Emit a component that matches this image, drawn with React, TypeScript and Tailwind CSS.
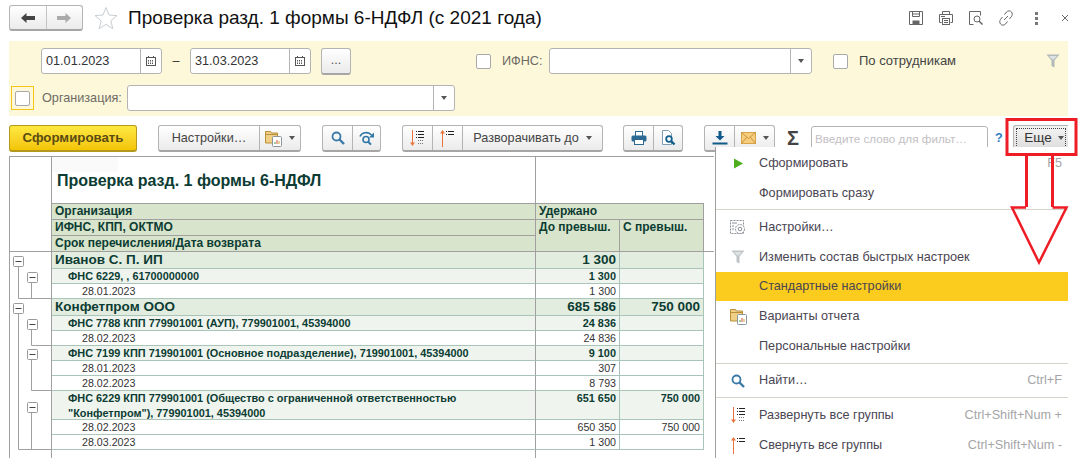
import type { ReactNode } from 'react';

const btn =
  'flex items-center justify-center bg-linear-to-b from-white to-[#ebebeb] border border-[#b4b4b4] border-b-2 border-b-[#a6a6a6] rounded-[3px]';

function Arrow() {
  return <span className="w-0 h-0 border-x-[3px] border-x-transparent border-t-[4px] border-t-[#555]" />;
}

function Calendar() {
  return (
    <svg width="12" height="12" viewBox="0 0 12 12" fill="none" stroke="#555">
      <rect x="1.5" y="2.5" width="9" height="8" />
      <path d="M3.5 1v2M8.5 1v2" />
      <path d="M3 5.5h6M3 7h6M3 8.5h6" strokeDasharray="1 1" />
    </svg>
  );
}

function Check({ className = '' }: { className?: string }) {
  return <span className={`block w-[15px] h-[15px] bg-white border border-[#a9a9a9] rounded-[2px] ${className}`} />;
}

function Filter({ color = '#a5aeb3' }: { color?: string }) {
  return (
    <svg width="14" height="14" viewBox="0 0 14 14">
      <path d="M0.5 0.5h13l-5 6v7l-3-1.5v-5.5z" fill={color} opacity="0.85" />
      <path d="M3 2h8l-3.2 3.6h-1.6z" fill="#dde2e4" />
    </svg>
  );
}

function Folder() {
  return (
    <svg width="17" height="17" viewBox="0 0 17 17">
      <path d="M0.5 1.5h5l1 1.5h6v10h-12z" fill="#f0cf87" stroke="#b98f3d" />
      <path d="M0.5 4.5h12" stroke="#b98f3d" />
      <rect x="7.5" y="6.5" width="9" height="10" rx="1" fill="#fff" stroke="#8a97a0" />
      <path d="M10 14v-2" stroke="#3aa03a" />
      <path d="M12 14v-4" stroke="#d9503f" />
      <path d="M14 14v-3" stroke="#d9a13f" />
    </svg>
  );
}

function Search({ color = '#3a7aa8' }: { color?: string }) {
  return (
    <svg width="14" height="14" viewBox="0 0 14 14" fill="none" stroke={color}>
      <circle cx="5.5" cy="5.5" r="4" strokeWidth="1.8" />
      <path d="M8.5 8.5l4.5 4.5" strokeWidth="2.4" />
    </svg>
  );
}

function SearchAgain() {
  return (
    <svg width="16" height="15" viewBox="0 0 16 15" fill="none" stroke="#2f76a6">
      <circle cx="7" cy="8.5" r="3" strokeWidth="1.6" />
      <path d="M9.2 10.8l2.8 2.8" strokeWidth="2" />
      <path d="M1 5.5c1.5-4 8-5.5 11.5-1.5" strokeWidth="1.6" />
      <path d="M15 1.5v5h-5z" fill="#2f76a6" stroke="none" />
    </svg>
  );
}

function ExpandAll() {
  return (
    <svg width="15" height="17" viewBox="0 0 15 17" fill="none">
      <path d="M2.5 0v14" stroke="#e8743b" />
      <path d="M0 12.5h5l-2.5 3.5z" fill="#e8743b" />
      <path d="M6 1.5h1M8 1.5h6M6 4.5h1M8 4.5h6M6 7.5h1M8 7.5h6" stroke="#222" />
      <path d="M8 10.5h6M8 13.5h6" stroke="#777" strokeDasharray="1 1" />
    </svg>
  );
}

function CollapseAll() {
  return (
    <svg width="15" height="17" viewBox="0 0 15 17" fill="none">
      <path d="M2.5 2v15" stroke="#e8743b" />
      <path d="M0 3.5h5l-2.5-3.5z" fill="#e8743b" />
      <path d="M6 1.5h1M8 1.5h6M6 4.5h1M8 4.5h6" stroke="#222" />
    </svg>
  );
}

function PrintBlue() {
  return (
    <svg width="16" height="16" viewBox="0 0 16 16">
      <rect x="4.5" y="1.5" width="7" height="5" fill="#fff" stroke="#2d6a93" />
      <rect x="0.5" y="5.5" width="15" height="6" rx="1.5" fill="#2d6a93" />
      <rect x="3.5" y="9.5" width="9" height="5" fill="#fff" stroke="#2d6a93" />
    </svg>
  );
}

function PreviewBlue() {
  return (
    <svg width="15" height="16" viewBox="0 0 15 16" fill="none">
      <path d="M1.5 0.5h6l3 3v11h-9z" stroke="#7f9db3" fill="#fff" />
      <circle cx="8" cy="9" r="2.8" stroke="#125f8e" strokeWidth="1.8" />
      <path d="M10 11l3.5 3.5" stroke="#125f8e" strokeWidth="2.4" />
    </svg>
  );
}

function Download() {
  return (
    <svg width="16" height="14" viewBox="0 0 16 14" fill="#0f5a8a">
      <path d="M6.5 0h3v5h3l-4.500 4.500L3.500 5h3z" />
      <rect x="0.5" y="11.5" width="15" height="2" />
    </svg>
  );
}

function Mail() {
  return (
    <svg width="15" height="12" viewBox="0 0 15 12">
      <rect x="0.5" y="0.5" width="14" height="11" fill="#f5cd7d" stroke="#d7a24a" />
      <path d="M0.5 0.5l7 6 7-6M0.5 11.500l5-6M14.500 11.500l-5-6" fill="none" stroke="#c9923c" />
    </svg>
  );
}

function HeaderIcons() {
  return (
    <div className="ml-auto flex items-center gap-[14px] pr-[21px]">
      <svg width="16" height="16" viewBox="0 0 16 16" fill="none" stroke="#666">
        <path d="M1.5 1.5h13v13h-13z" />
        <path d="M4.5 1.5v5h7v-5M4 4h8" />
        <rect x="5" y="11" width="6" height="3.5" fill="#666" />
      </svg>
      <svg width="16" height="16" viewBox="0 0 16 16" fill="none" stroke="#666">
        <path d="M4.5 4.500v-3h7v3" />
        <path d="M3.5 12.500h-2v-8h13v8h-2" />
        <rect x="4.5" y="8.500" width="7" height="6" />
        <path d="M6 10.500h4M6 12.500h4M3 6.500h4" />
      </svg>
      <svg width="16" height="16" viewBox="0 0 16 16" fill="none" stroke="#666">
        <path d="M5 1.5h-3.500v13h4" />
        <path d="M5 1.5h7.500v4" />
        <circle cx="9" cy="9" r="3" />
        <path d="M11 11l3.500 3.500" strokeWidth="1.5" />
      </svg>
      <svg width="16" height="16" viewBox="0 0 16 16" fill="none" stroke="#666">
        <path d="M6.500 4.500l2-2.500c1.500-1.500 4-1.500 5 0s1 3 0 4.500l-2 2.500" />
        <path d="M9.500 11.500l-2 2.500c-1.500 1.500-4 1.500-5 0s-1-3 0-4.500l2-2.500" />
        <path d="M6 10l4-4" />
      </svg>
      <span className="flex flex-col gap-[2px] mx-[7px]">
        <span className="w-[3px] h-[3px] bg-[#777]" />
        <span className="w-[3px] h-[3px] bg-[#777]" />
        <span className="w-[3px] h-[3px] bg-[#777]" />
      </span>
      <svg className="ml-[2px]" width="8" height="8" viewBox="0 0 8 8" stroke="#666">
        <path d="M1 1l6 6M7 1l-6 6" />
      </svg>
    </div>
  );
}

function DateField({ value }: { value: string }) {
  return (
    <div className="flex w-[121px] h-[26px] bg-white border border-[#b4b4b4] rounded-[3px]">
      <span className="flex-1 pl-[4px] leading-[24px] text-[#333]">{value}</span>
      <span className="w-[21px] flex items-center justify-center border-l border-[#b4b4b4]">
        <Calendar />
      </span>
    </div>
  );
}

function ComboField({ width }: { width: string }) {
  return (
    <div className={`flex ${width} h-[26px] bg-white border border-[#b4b4b4] rounded-[3px]`}>
      <span className="flex-1" />
      <span className="w-[21px] flex items-center justify-center border-l border-[#b4b4b4]">
        <Arrow />
      </span>
    </div>
  );
}

function ToolGroup({ children, className = '' }: { children: ReactNode; className?: string }) {
  return <div className={`${btn} h-[27px] divide-x divide-[#b4b4b4] ${className}`}>{children}</div>;
}

function ToolCell({ children, className = 'w-[30px]' }: { children: ReactNode; className?: string }) {
  return <span className={`flex items-center justify-center h-full ${className}`}>{children}</span>;
}

function Toolbar() {
  return (
    <div className="flex items-start pl-[9px] pt-[9px] h-[40px] text-[12.67px] text-[#444]">
      <button className="w-[128px] h-[27px] rounded-[3px] border border-[#b39a1e] border-b-2 bg-linear-to-b from-[#ffe93f] to-[#f3c400] font-bold text-[13.25px] text-[#5b4c12]">
        Сформировать
      </button>
      <ToolGroup className="ml-[21px] w-[143px]">
        <ToolCell className="w-[101px]">Настройки…</ToolCell>
        <ToolCell className="flex-1 gap-[7px]">
          <Folder />
          <Arrow />
        </ToolCell>
      </ToolGroup>
      <ToolGroup className="ml-[21px] w-[59px]">
        <ToolCell>
          <Search />
        </ToolCell>
        <ToolCell className="flex-1">
          <SearchAgain />
        </ToolCell>
      </ToolGroup>
      <ToolGroup className="ml-[21px] w-[201px]">
        <ToolCell>
          <ExpandAll />
        </ToolCell>
        <ToolCell>
          <CollapseAll />
        </ToolCell>
        <ToolCell className="flex-1 gap-[7px]">
          Разворачивать до
          <Arrow />
        </ToolCell>
      </ToolGroup>
      <ToolGroup className="ml-[20px] w-[60px]">
        <ToolCell>
          <PrintBlue />
        </ToolCell>
        <ToolCell className="flex-1">
          <PreviewBlue />
        </ToolCell>
      </ToolGroup>
      <ToolGroup className="ml-[21px] w-[71px]">
        <ToolCell>
          <Download />
        </ToolCell>
        <ToolCell className="flex-1 gap-[7px]">
          <Mail />
          <Arrow />
        </ToolCell>
      </ToolGroup>
      <span className="ml-[12px] w-[24px] leading-[27px] text-[20px] font-bold text-[#444]">Σ</span>
      <div className="mt-[1px] w-[177px] h-[26px] bg-white border border-[#b4b4b4] rounded-[3px] pl-[3px] leading-[24px] text-[11.7px] text-[#c4c0c4] truncate">
        Введите слово для фильт…
      </div>
      <span className="ml-[7px] w-[18px] leading-[27px] font-bold text-[#2f7fc1]">?</span>
      <button className="relative w-[55px] h-[27px] bg-linear-to-b from-[#f4f4f4] to-[#dcdcdc] border border-[#b4b4b4] border-b-2 border-r-0 rounded-l-[3px] flex items-center justify-center gap-[6px] pl-[6px] text-[13.5px] text-[#333]">
        <span className="absolute inset-[2px] border border-dotted border-[#444]" />
        Еще
        <Arrow />
      </button>
    </div>
  );
}

function FilterPanel() {
  return (
    <div className="ml-[9px] w-[1059px] h-[75px] bg-[#fdf8d9] text-[12.67px] flex flex-col">
      <div className="flex items-center h-[33px] pt-[7px]">
        <span className="ml-[32px]">
          <DateField value="01.01.2023" />
        </span>
        <span className="w-[28px] text-center text-[#333]">–</span>
        <DateField value="31.03.2023" />
        <span className={`${btn} ml-[10px] w-[30px] h-[27px] text-[#555]`}>...</span>
        <Check className="ml-[125px]" />
        <span className="ml-[11px] w-[47px] text-[#6d6a66]">ИФНС:</span>
        <ComboField width="w-[263px]" />
        <Check className="ml-[21px]" />
        <span className="ml-[11px] text-[13px] text-[#444]">По сотрудникам</span>
        <span className="ml-auto mr-[8px]">
          <Filter />
        </span>
      </div>
      <div className="flex items-center mt-[11px] h-[26px]">
        <span className="ml-[2px] w-[23px] h-[24px] border border-[#f5c518] flex items-center justify-center">
          <Check />
        </span>
        <span className="ml-[8px] w-[85px] text-[#6d6a66]">Организация:</span>
        <ComboField width="w-[328px]" />
      </div>
    </div>
  );
}

type RowKind = 'top' | 'group' | 'date';

const rows: { h: string; kind: RowKind; text: ReactNode; a?: string; b?: string }[] = [
  { h: 'h-[17px]', kind: 'top', text: 'Иванов С. П. ИП', a: '1 300' },
  { h: 'h-[15px]', kind: 'group', text: 'ФНС 6229, , 61700000000', a: '1 300' },
  { h: 'h-[15px]', kind: 'date', text: '28.01.2023', a: '1 300' },
  { h: 'h-[17px]', kind: 'top', text: 'Конфетпром ООО', a: '685 586', b: '750 000' },
  { h: 'h-[15px]', kind: 'group', text: 'ФНС 7788 КПП 779901001 (АУП), 779901001, 45394000', a: '24 836' },
  { h: 'h-[15px]', kind: 'date', text: '28.02.2023', a: '24 836' },
  { h: 'h-[15px]', kind: 'group', text: 'ФНС 7199 КПП 719901001 (Основное подразделение), 719901001, 45394000', a: '9 100' },
  { h: 'h-[15px]', kind: 'date', text: '28.01.2023', a: '307' },
  { h: 'h-[15px]', kind: 'date', text: '28.02.2023', a: '8 793' },
  {
    h: 'h-[29px]',
    kind: 'group',
    text: (
      <>
        ФНС 6229 КПП 779901001 (Общество с ограниченной ответственностью
        <br />
        "Конфетпром"), 779901001, 45394000
      </>
    ),
    a: '651 650',
    b: '750 000',
  },
  { h: 'h-[15px]', kind: 'date', text: '28.02.2023', a: '650 350', b: '750 000' },
  { h: 'h-[15px]', kind: 'date', text: '28.03.2023', a: '1 300' },
];

const rowStyle: Record<RowKind, { bg: string; main: string; num: string }> = {
  top: { bg: 'bg-[#e3eddf]', main: 'pl-[3px] text-[13.5px] font-bold leading-[16px]', num: 'text-[13.5px] font-bold leading-[16px]' },
  group: { bg: 'bg-[#eff4ee]', main: 'pl-[16px] text-[10.9px] font-bold leading-[14.5px]', num: 'text-[10.9px] font-bold leading-[14px]' },
  date: { bg: 'bg-white', main: 'pl-[30px] text-[10.67px] leading-[14px] text-[#333]', num: 'text-[10.67px] leading-[14px] text-[#333]' },
};

function ReportRow({ row }: { row: (typeof rows)[number] }) {
  const s = rowStyle[row.kind];
  return (
    <div className={`flex ${row.h} text-[#0c3c33]`}>
      <div className={`w-[484px] ${s.bg} border-b border-b-[#a9c4b8] border-r border-r-[#a0a0a0] ${s.main}`}>{row.text}</div>
      <div className={`w-[84px] ${s.bg} border-b border-b-[#a9c4b8] border-r border-r-[#a9c4b8] text-right pr-[3px] ${s.num}`}>{row.a}</div>
      <div className={`w-[84px] ${s.bg} border-b border-b-[#a9c4b8] border-r border-r-[#a9c4b8] text-right pr-[3px] ${s.num}`}>{row.b}</div>
    </div>
  );
}

function TreeNode({ x, y }: { x: number; y: number }) {
  return (
    <g>
      <rect x={x + 0.5} y={y + 0.5} width="10" height="10" rx="1" fill="#fff" stroke="#999" />
      <path d={`M${x + 2.5} ${y + 5.5}h6`} stroke="#444" />
    </g>
  );
}

// дерево группировок слева от отчета, координаты от верха таблицы
function TreeGutter() {
  return (
    <svg className="shrink-0 border-r border-[#a0a0a0]" width="42" height="301" viewBox="0 0 41 301" fill="none" stroke="#a0a0a0">
      <path d="M0 94.5H41" />
      <path d="M8.5 109v32.5H41M21.5 125v16" />
      <path d="M8.5 156v136.5H41" />
      <path d="M21.5 172v16.5H41M21.5 202v31.5H41M21.5 255v37" />
      <TreeNode x={3} y={99} />
      <TreeNode x={17} y={115} />
      <TreeNode x={3} y={146} />
      <TreeNode x={17} y={162} />
      <TreeNode x={17} y={192} />
      <TreeNode x={17} y={245} />
    </svg>
  );
}

function Report() {
  const head = 'bg-[#d8e4cb] border-r border-[#a0a0a0] pl-[3px] text-[12px] font-bold leading-[15px] text-[#0c3c33]';
  return (
    <div className="ml-[9px] w-[705px] h-[302px] flex border-t border-l border-[#a0a0a0] overflow-hidden">
      <TreeGutter />
      <div className="flex-1">
        <div className="flex h-[47px] border-b border-[#a0a0a0] w-[652px]">
          <div className="relative w-[484px] border-r border-[#a0a0a0] pl-[5px] pt-[14px] text-[16px] font-bold leading-[20px] text-[#0c3c33]">
            <span className="absolute left-0 top-0 w-[66px] h-[15px] bg-[#fafafa]" />
            <span className="relative">Проверка разд. 1 формы 6-НДФЛ</span>
          </div>
        </div>
        <div className="grid grid-cols-[484px_84px_84px] grid-rows-[16px_16px_15px] border-b border-[#a0a0a0] w-[662px] pr-[10px]">
          <div className={`${head} border-b`}>Организация</div>
          <div className={`${head} border-b col-span-2`}>Удержано</div>
          <div className={`${head} border-b`}>ИФНС, КПП, ОКТМО</div>
          <div className={`${head} row-span-2`}>До превыш.</div>
          <div className={`${head} row-span-2`}>С превыш.</div>
          <div className={head}>Срок перечисления/Дата возврата</div>
        </div>
        {rows.map((row, i) => (
          <ReportRow key={i} row={row} />
        ))}
        <div className="w-[484px] h-[9px] border-r border-[#a0a0a0]" />
      </div>
    </div>
  );
}

function MenuItem({
  icon,
  text,
  hint,
  active,
}: {
  icon?: ReactNode;
  text: string;
  hint?: string;
  active?: boolean;
}) {
  return (
    <div className={`flex items-center text-[12.67px] ${active ? 'h-[29px] bg-[#fbcb1e]' : 'h-[30px]'}`}>
      <span className="w-[43px] shrink-0 flex items-center justify-center pl-[1px]">{icon}</span>
      <span className="flex-1 text-[#4a4552]">{text}</span>
      {hint && <span className="pr-[6px] text-[#a5a5a8]">{hint}</span>}
    </div>
  );
}

function Sep({ className = '' }: { className?: string }) {
  return <div className={`h-px bg-[#d6d4c8] ${className}`} />;
}

function SettingsIcon() {
  return (
    <svg width="16" height="15" viewBox="0 0 16 15" fill="none" stroke="#8a8f94">
      <rect x="0.5" y="0.5" width="13" height="13" strokeDasharray="2 1" />
      <path d="M2 3h5M2 6h2M2 9h2" />
      <circle cx="10" cy="9" r="4.5" fill="#fff" strokeDasharray="2 1" />
      <circle cx="10" cy="9" r="1.8" />
    </svg>
  );
}

function DropMenu() {
  return (
    <div className="absolute left-[715px] top-[147px] w-[353px] h-[311px] bg-white border-l border-[#a0a0a0] pt-[1px] overflow-hidden">
      <MenuItem
        icon={
          <svg width="11" height="11" viewBox="0 0 11 11">
            <path d="M1 0.5l9 5-9 5z" fill="#4fae1e" />
          </svg>
        }
        text="Сформировать"
        hint="F5"
      />
      <MenuItem text="Формировать сразу" />
      <Sep className="mt-[1px] mb-[2px]" />
      <MenuItem icon={<SettingsIcon />} text="Настройки…" />
      <MenuItem icon={<Filter color="#b4b9bc" />} text="Изменить состав быстрых настроек" />
      <MenuItem text="Стандартные настройки" active />
      <MenuItem icon={<Folder />} text="Варианты отчета" />
      <MenuItem text="Персональные настройки" />
      <Sep className="mt-[2px]" />
      <div className="h-[33px] flex flex-col justify-center">
        <MenuItem icon={<Search />} text="Найти…" hint="Ctrl+F" />
      </div>
      <Sep className="mb-[2px]" />
      <MenuItem icon={<ExpandAll />} text="Развернуть все группы" hint="Ctrl+Shift+Num +" />
      <MenuItem icon={<CollapseAll />} text="Свернуть все группы" hint="Ctrl+Shift+Num -" />
    </div>
  );
}

// красная пометка поверх скриншота
function Annotation() {
  return (
    <svg className="absolute left-0 top-0 pointer-events-none" width="1090" height="458" fill="none" stroke="#ee1c25">
      <rect x="1007" y="119.5" width="69" height="35" strokeWidth="3" />
      <path d="M1026.5 155v52M1052.5 155v52" strokeWidth="3" />
      <path d="M1026 207.5h-14l27 55 27.5-55h-14" strokeWidth="2.5" />
    </svg>
  );
}

export default function App() {
  return (
    <div className="relative w-[1090px] h-[458px] overflow-hidden bg-white font-['Liberation_Sans',Arial,sans-serif]">
      <div className="flex items-center h-[41px] pl-[9px] pb-[5px]">
        <div className={`${btn} w-[74px] h-[26px] divide-x divide-[#c4c4c4]`}>
          <span className="flex-1 h-full flex items-center justify-center">
            <svg width="14" height="10" viewBox="0 0 14 10" fill="#444">
              <path d="M5.5 0v3H14v4H5.5v3L0 5z" />
            </svg>
          </span>
          <span className="flex-1 h-full flex items-center justify-center">
            <svg width="14" height="10" viewBox="0 0 14 10" fill="#aaa">
              <path d="M8.5 0v3H0v4h8.500v3L14 5z" />
            </svg>
          </span>
        </div>
        <svg className="ml-[11px]" width="24" height="24" viewBox="0 0 24 24" fill="#fff" stroke="#c9ced2">
          <path d="M12 1.5l3 7.500 8 .6-6.200 5.200 2 7.900L12 18.400l-6.800 4.300 2-7.900L1 9.600 9 9z" />
        </svg>
        <h1 className="ml-[10px] text-[19px] text-[#111] whitespace-nowrap">Проверка разд. 1 формы 6-НДФЛ (с 2021 года)</h1>
        <HeaderIcons />
      </div>
      <FilterPanel />
      <Toolbar />
      <Report />
      <DropMenu />
      <Annotation />
    </div>
  );
}
